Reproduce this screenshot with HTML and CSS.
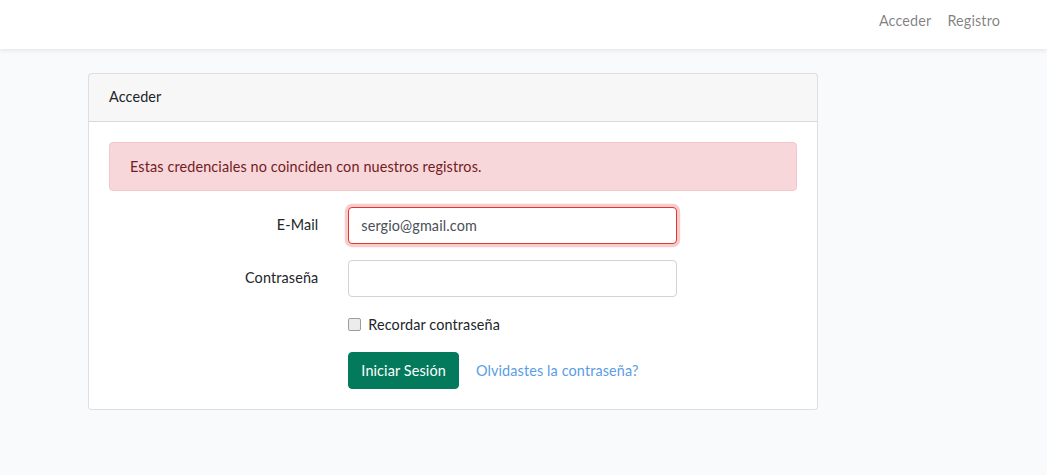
FILE: index.html
```html
<!DOCTYPE html>
<html lang="es">
<head>
<meta charset="utf-8">
<title>Acceder</title>
<link rel="stylesheet" href="styles.css">
</head>
<body>
<nav class="navbar">
  <ul class="nav-links">
    <li><a href="#" class="nav-link">Acceder</a></li>
    <li><a href="#" class="nav-link">Registro</a></li>
  </ul>
</nav>
<main class="main">
  <div class="card">
    <div class="card-header">Acceder</div>
    <div class="card-body">
      <div class="alert">Estas credenciales no coinciden con nuestros registros.</div>
      <form class="form">
        <div class="row">
          <label class="label" for="email">E-Mail</label>
          <div class="field"><input id="email" class="input is-invalid" type="email" value="sergio@gmail.com"></div>
        </div>
        <div class="row">
          <label class="label" for="password">Contraseña</label>
          <div class="field"><input id="password" class="input" type="password"></div>
        </div>
        <div class="row">
          <div class="label label-empty"></div>
          <div class="field">
            <label class="check"><input type="checkbox" class="check-input"> Recordar contraseña</label>
          </div>
        </div>
        <div class="row row-last">
          <div class="label label-empty"></div>
          <div class="field actions">
            <button type="button" class="btn">Iniciar Sesión</button>
            <a href="#" class="btn-link">Olvidastes la contraseña?</a>
          </div>
        </div>
      </form>
    </div>
  </div>
</main>
</body>
</html>
```
FILE: styles.css
```css
* { box-sizing: border-box; }
body {
  margin: 0;
  background: #f8fafc;
  font-family: Lato, "Noto Sans", sans-serif;
  font-size: 14.4px;
  line-height: 1.6;
  letter-spacing: 0.13px;
  color: #212529;
}
.navbar {
  height: 49px;
  background: #fff;
  box-shadow: 0 2px 4px rgba(0,0,0,0.075);
  display: flex;
  justify-content: flex-end;
  align-items: center;
  padding-right: 39px;
}
.nav-links {
  list-style: none;
  margin: 0;
  padding: 0;
  display: flex;
}
.nav-link {
  display: block;
  padding: 0 8px;
  color: rgba(0,0,0,0.5);
  text-decoration: none;
  margin-top: -8px;
}
.main {
  padding: 24px 0 24px 88px;
}
.card {
  width: 730px;
  background: #fff;
  border: 1px solid rgba(0,0,0,0.125);
  border-radius: 4px;
}
.card-header {
  padding: 11px 20px 13px;
  background: rgba(0,0,0,0.03);
  border-bottom: 1px solid rgba(0,0,0,0.125);
}
.card-body {
  padding: 20px;
}
.alert {
  padding: 12px 20px;
  background: #f8d7da;
  border: 1px solid #f5c6cb;
  border-radius: 4px;
  color: #721c24;
  margin-bottom: 16px;
}
.form {
  margin: 0;
}
.row {
  display: flex;
  margin: 0 -15px 16px;
}
.row-last { margin-bottom: 0; }
.label {
  width: 239.33px;
  padding: 6px 15px 8px;
  text-align: right;
}
.label-empty { padding: 0 15px; }
.field {
  width: 359px;
  padding: 0 15px;
}
.input {
  display: block;
  width: 100%;
  height: 37px;
  padding: 6px 12px 7px;
  font: inherit;
  letter-spacing: inherit;
  color: #495057;
  background: #fff;
  border: 1px solid #ced4da;
  border-radius: 4px;
}
.input.is-invalid {
  border-color: #e3342f;
  box-shadow: 0 0 0 3.2px rgba(227,52,47,0.25);
  outline: none;
}
.check {
  display: flex;
  align-items: center;
  gap: 7px;
  height: 23px;
}
.check-input {
  appearance: none;
  -webkit-appearance: none;
  margin: 0;
  width: 13px;
  height: 13px;
  background: #ececec;
  border: 1px solid #9c9c9c;
  border-radius: 2px;
}
.actions {
  display: flex;
  align-items: center;
}
.btn {
  height: 37px;
  padding: 6px 12px;
  font: inherit;
  letter-spacing: inherit;
  color: #fff;
  background: #047a5c;
  border: 1px solid #047a5c;
  border-radius: 4px;
}
.btn-link {
  margin-left: 17px;
  color: #5a9de6;
  text-decoration: none;
}
```
